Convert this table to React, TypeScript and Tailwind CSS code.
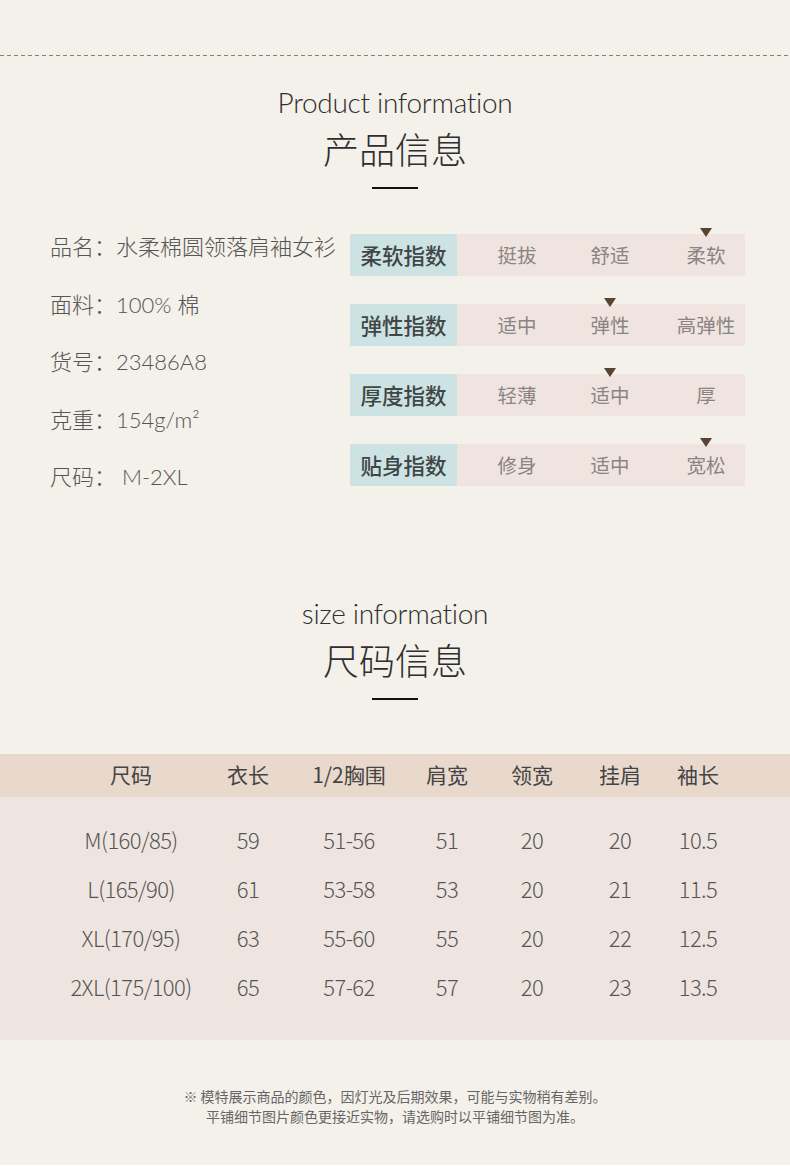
const latin = "font-['Lato','Noto_Sans_CJK_SC',sans-serif]";
const cjk = "font-['Noto_Sans_CJK_SC',sans-serif]";

const info = [
  ['品名：', '水柔棉圆领落肩袖女衫'],
  ['面料：', '100% 棉'],
  ['货号：', '23486A8'],
  ['克重：', '154g/m²'],
  ['尺码：', ' M-2XL'],
];

const indexes = [
  { label: '柔软指数', values: ['挺拔', '舒适', '柔软'], mark: 2 },
  { label: '弹性指数', values: ['适中', '弹性', '高弹性'], mark: 1 },
  { label: '厚度指数', values: ['轻薄', '适中', '厚'], mark: 1 },
  { label: '贴身指数', values: ['修身', '适中', '宽松'], mark: 2 },
];

const headers = ['尺码', '衣长', '1/2胸围', '肩宽', '领宽', '挂肩', '袖长'];

const sizes = [
  ['M(160/85)', '59', '51-56', '51', '20', '20', '10.5'],
  ['L(165/90)', '61', '53-58', '53', '20', '21', '11.5'],
  ['XL(170/95)', '63', '55-60', '55', '20', '22', '12.5'],
  ['2XL(175/100)', '65', '57-62', '57', '20', '23', '13.5'],
];

const cols = 'grid grid-cols-[160px_74px_128px_68px_102px_74px_82px] pl-[51px]';

function Heading({ en, zh }: { en: string; zh: string }) {
  return (
    <div className="flex flex-col items-center text-[#2e2e2e]">
      <div className={`${latin} text-[28px] leading-[30px] font-light tracking-[-0.3px]`}>{en}</div>
      <div className={`${cjk} mt-[9px] text-[36px] leading-[44px] font-light`}>{zh}</div>
      <div className="mt-[17px] h-[2px] w-[46px] bg-[#111]" />
    </div>
  );
}

export default function App() {
  return (
    <div className="w-[790px] bg-[#f4f0ea] pt-[55px] pb-[39px]">
      <div className="h-px w-full bg-[repeating-linear-gradient(90deg,#8c7f78_0_4px,transparent_4px_7px)]" />

      <div className="mt-[31px]">
        <Heading en="Product information" zh="产品信息" />
      </div>

      <div className="mt-[28px] flex pl-[50px]">
        <div className={`${latin} w-[300px] shrink-0 text-[22px] font-light text-[#555]`}>
          {info.map(([k, v]) => (
            <div key={k} className="h-[57.5px] leading-[57.5px] whitespace-pre">
              <span className={cjk}>{k}</span>
              {v}
            </div>
          ))}
        </div>

        <div className="flex flex-col gap-[28px] pt-[17px]">
          {indexes.map((row) => (
            <div key={row.label} className="flex h-[42px] w-[395px]">
              <div
                className={`${cjk} flex w-[107px] shrink-0 items-center justify-center bg-[#cde2e2] text-[21.5px] font-medium text-[#404646]`}
              >
                {row.label}
              </div>
              <div className="grid w-[288px] grid-cols-[72px_114px_78px] bg-[#efe4df] pl-[24px]">
                {row.values.map((v, i) => (
                  <div
                    key={v}
                    className={`${cjk} relative flex items-center justify-center text-[19.5px] text-[#8a8584]`}
                  >
                    {i === row.mark && (
                      <div className="absolute top-[-6px] left-1/2 h-0 w-0 -translate-x-1/2 border-x-[6px] border-t-[9px] border-x-transparent border-t-[#5b4232]" />
                    )}
                    {v}
                  </div>
                ))}
              </div>
            </div>
          ))}
        </div>
      </div>

      <div className="mt-[93px]">
        <Heading en="size information" zh="尺码信息" />
      </div>

      <div className="mt-[54px]">
        <div className={`${cols} h-[43px] items-center bg-[#e9d9cc] text-[21px] text-[#444] ${cjk}`}>
          {headers.map((h) => (
            <div key={h} className="text-center">
              {h}
            </div>
          ))}
        </div>
        <div className="bg-[#efe5e0] pt-[18px] pb-[29px]">
          {sizes.map((r) => (
            <div
              key={r[0]}
              className={`${cols} h-[49px] items-center text-[22px] font-light tracking-[-0.6px] text-[#555] ${cjk}`}
            >
              {r.map((c, i) => (
                <div key={i} className="text-center">
                  {c}
                </div>
              ))}
            </div>
          ))}
        </div>
      </div>

      <div className={`${cjk} mt-[46px] text-center text-[14px] leading-[20px] text-[#666]`}>
        <div>※ 模特展示商品的颜色，因灯光及后期效果，可能与实物稍有差别。</div>
        <div>平铺细节图片颜色更接近实物，请选购时以平铺细节图为准。</div>
      </div>
    </div>
  );
}
